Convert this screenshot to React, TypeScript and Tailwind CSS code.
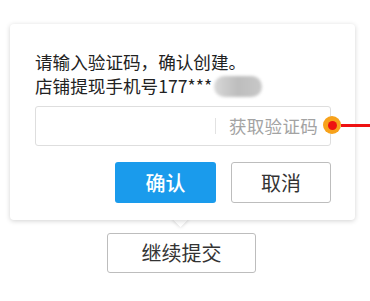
const font = "font-['Noto_Sans_CJK_SC','Noto_Sans',sans-serif]";

export default function App() {
  return (
    <div className={`w-[370px] h-[301px] bg-white overflow-hidden pt-[24px] ${font}`}>
      <div className="relative ml-[10px] w-[345px]">
        {/* arrow */}
        <div className="absolute left-[165px] bottom-[-5px] w-[11px] h-[11px] rotate-45 bg-white shadow-[0_0_4px_rgba(0,0,0,0.2)]" />
        <div className="relative z-10 bg-white rounded-[4px] shadow-[0_1px_5px_rgba(0,0,0,0.18)] pt-[26px] pb-[17px] pl-[25px] pr-[24px]">
          <p className="text-[17.6px] leading-[24px] text-[#222]">请输入验证码，确认创建。</p>
          <p className="text-[17.6px] leading-[24px] text-[#222] flex items-center">
            店铺提现手机号177***
            <span className="ml-[2px] inline-block w-[48px] h-[21px] rounded-full bg-gradient-to-r from-[#d8d8d8] via-[#bdbdbd] to-[#c8c8c8] blur-[1.5px]" />
          </p>
          <div className="relative mt-[8px] h-[40px] border border-[#dedede] rounded-[3px] flex items-center justify-end pr-[12px]">
            <span className="w-px h-[16px] bg-[#e2e2e2] mr-[13px]" />
            <span className="text-[17.5px] text-[#a3a3a3] tracking-[0.3px]">获取验证码</span>
            {/* marker */}
            <span className="absolute right-[-11px] top-[9px] w-[18px] h-[18px] rounded-full bg-[#f7a21b] flex items-center justify-center z-10">
              <span className="w-[9px] h-[9px] rounded-full bg-[#ee1111]" />
            </span>
            <span className="absolute left-[305px] top-[17px] w-[40px] h-[3px] bg-[#ee1111] z-0" />
          </div>
          <div className="mt-[16px] flex justify-end gap-[15px]">
            <button className="w-[101px] h-[41px] rounded-[3px] bg-[#1a9bec] text-white text-[20px] font-medium">
              确认
            </button>
            <button className="w-[100px] h-[41px] rounded-[3px] border border-[#bdbdbd] bg-white text-[#333] text-[20px]">
              取消
            </button>
          </div>
        </div>
      </div>
      <button className={`mt-[13px] ml-[107px] w-[149px] h-[40px] rounded-[3px] border border-[#bdbdbd] bg-white text-[#333] text-[20px] ${font}`}>
        继续提交
      </button>
    </div>
  );
}
